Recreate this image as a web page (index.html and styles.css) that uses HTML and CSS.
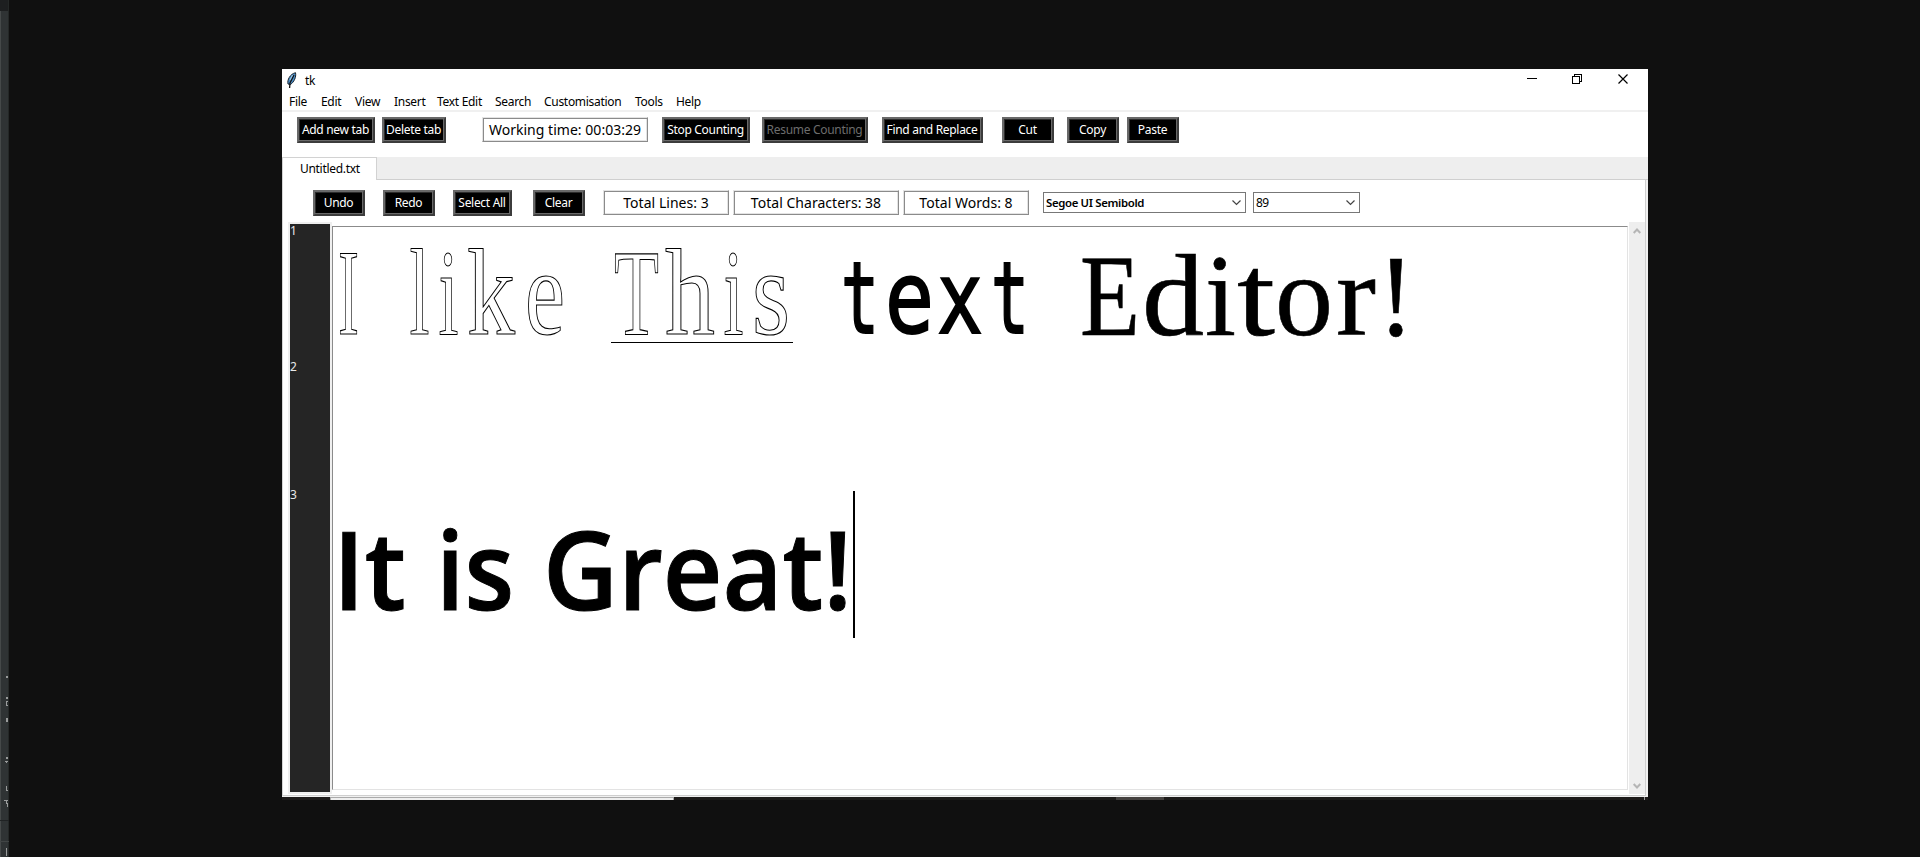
FILE: index.html
```html
<!DOCTYPE html>
<html lang="en">
<head>
<meta charset="utf-8">
<title>tk</title>
<link rel="stylesheet" href="styles.css">
</head>
<body>
<div class="desktop">
  <svg class="side-strip" width="9" height="857" viewBox="0 0 9 857">
    <rect width="9" height="857" fill="#2f3334"/>
    <rect width="1" height="857" fill="#454949"/>
    <rect width="8" height="11" fill="#1d1f20"/>
    <rect x="8" width="1" height="857" fill="#242827"/>
    <g fill="#9a9c9c">
      <rect x="6" y="676" width="2" height="2"/>
      <rect x="6" y="697" width="2" height="2"/>
      <path d="M6 701h2v1h-1v3h1v1h-2z"/>
      <rect x="6" y="718" width="2" height="4"/>
      <rect x="6" y="757" width="2" height="2"/>
      <path d="M5 761h3v1h-1v1h-1v-1h-1z"/>
      <path d="M6 786h1v4h1v1h-2z"/>
      <path d="M4 800h4v1h-1v2h1v4h-1v-3h-1v-3h-2z"/>
      <rect x="6" y="848" width="1" height="8"/>
    </g>
    <rect y="820" width="9" height="1" fill="#202324"/>
    <rect y="841" width="9" height="1" fill="#414545"/>
  </svg>
  <main class="window">
    <header class="titlebar">
      <svg class="feather" width="10" height="17" viewBox="0 0 10 17">
        <path d="M1 12C0 8 3 2 8.500.7C9.500 5 7 10 3.500 12.500Z" fill="#4a8dc6" stroke="#17222d" stroke-width="1"/>
        <path d="M7 3L3 11L2.600 16" fill="none" stroke="#111" stroke-width="1.300"/>
        <path d="M5.500 3L3 8" stroke="#a5cbe8" stroke-width="1"/>
      </svg>
      <span class="title">tk</span>
      <svg class="controls" width="102" height="12" viewBox="0 0 102 12" fill="none" stroke="#000" shape-rendering="crispEdges">
        <path d="M0 5.500h10M45.500 3.500h7v7h-7zM47.500 3.500v-2h7v7h-2"/>
        <path d="M91.500 1.500l9 9m0-9l-9 9" shape-rendering="auto" stroke-width="1.200"/>
      </svg>
    </header>
    <nav class="menu">
      <span class="m-file">File</span><span class="m-edit">Edit</span><span class="m-view">View</span><span class="m-insert">Insert</span><span class="m-text">Text Edit</span><span class="m-search">Search</span><span class="m-custom">Customisation</span><span class="m-tools">Tools</span><span>Help</span>
    </nav>
    <div class="toolbar">
      <div class="btn add">Add new tab</div>
      <div class="btn del">Delete tab</div>
      <div class="counter time">Working time: 00:03:29</div>
      <div class="btn stop">Stop Counting</div>
      <div class="btn resume">Resume Counting</div>
      <div class="btn find">Find and Replace</div>
      <div class="btn cut">Cut</div>
      <div class="btn copy">Copy</div>
      <div class="btn paste">Paste</div>
    </div>
    <div class="tabs"><div class="tab">Untitled.txt</div><div class="tabs-rest"></div></div>
    <section class="pane">
      <div class="editbar">
        <div class="btn undo">Undo</div>
        <div class="btn redo">Redo</div>
        <div class="btn select">Select All</div>
        <div class="btn clear">Clear</div>
        <div class="counter lines">Total Lines: 3</div>
        <div class="counter chars">Total Characters: 38</div>
        <div class="counter words">Total Words: 8</div>
        <div class="combo family"><span>Segoe UI Semibold</span><svg width="9" height="6" viewBox="0 0 9 6"><path d="M.5.500l4 4l4-4" fill="none" stroke="#444" stroke-width="1.200"/></svg></div>
        <div class="combo size"><span>89</span><svg width="9" height="6" viewBox="0 0 9 6"><path d="M.5.500l4 4l4-4" fill="none" stroke="#444" stroke-width="1.200"/></svg></div>
      </div>
      <div class="editor">
        <div class="gutter"><span class="n1">1</span><span class="n2">2</span><span>3</span></div>
        <svg class="page" width="1294" height="562" viewBox="333 227 1294 562">
          <g class="hollow">
            <text x="338" y="333.500" textLength="21" lengthAdjust="spacingAndGlyphs">I</text>
            <text x="409.500" y="333.500" textLength="20" lengthAdjust="spacingAndGlyphs">l</text>
            <text x="438.500" y="333.500" textLength="20" lengthAdjust="spacingAndGlyphs">i</text>
            <text x="467" y="333.500" textLength="48" lengthAdjust="spacingAndGlyphs">k</text>
            <text x="525" y="333.500" textLength="40" lengthAdjust="spacingAndGlyphs">e</text>
            <text x="614" y="333.500" textLength="45" lengthAdjust="spacingAndGlyphs">T</text>
            <text x="665" y="333.500" textLength="50" lengthAdjust="spacingAndGlyphs">h</text>
            <text x="723.500" y="333.500" textLength="20" lengthAdjust="spacingAndGlyphs">i</text>
            <text x="752" y="333.500" textLength="38" lengthAdjust="spacingAndGlyphs">s</text>
          </g>
          <rect x="611" y="342" width="182" height="1"/>
          <g class="fixed">
            <text x="841" y="333" textLength="38" lengthAdjust="spacingAndGlyphs">t</text>
            <text x="885" y="333" textLength="49" lengthAdjust="spacingAndGlyphs">e</text>
            <text x="937" y="333" textLength="46" lengthAdjust="spacingAndGlyphs">x</text>
            <text x="991" y="333" textLength="38" lengthAdjust="spacingAndGlyphs">t</text>
          </g>
          <g class="serif">
            <text x="1080" y="334.500" textLength="60" lengthAdjust="spacingAndGlyphs">E</text>
            <text x="1142" y="334.500" textLength="62" lengthAdjust="spacingAndGlyphs">d</text>
            <text x="1205" y="334.500" textLength="31" lengthAdjust="spacingAndGlyphs">i</text>
            <text x="1237" y="334.500" textLength="38" lengthAdjust="spacingAndGlyphs">t</text>
            <text x="1275" y="334.500" textLength="58" lengthAdjust="spacingAndGlyphs">o</text>
            <text x="1336" y="334.500" textLength="40" lengthAdjust="spacingAndGlyphs">r</text>
            <text x="1378" y="334.500" textLength="36" lengthAdjust="spacingAndGlyphs">!</text>
          </g>
          <g class="semi">
            <text x="333" y="610" textLength="73" lengthAdjust="spacingAndGlyphs">It</text>
            <text x="436" y="610" textLength="78" lengthAdjust="spacingAndGlyphs">is</text>
            <text x="543" y="610" textLength="309" lengthAdjust="spacingAndGlyphs">Great!</text>
          </g>
          <rect x="853" y="491" width="2" height="147"/>
        </svg>
        <div class="scrollbar">
          <svg width="8" height="6" viewBox="0 0 8 6"><path d="M.7 5l3.300-3.500L7.300 5" fill="none" stroke="#b5b5b5" stroke-width="2"/></svg>
          <svg width="8" height="6" viewBox="0 0 8 6"><path d="M.7 1l3.300 3.500L7.300 1" fill="none" stroke="#b5b5b5" stroke-width="2"/></svg>
        </div>
      </div>
    </section>
  </main>
  <div class="under"><i class="u1"></i><i class="u2"></i><i class="u3"></i></div>
</div>
</body>
</html>
```
FILE: styles.css
```css
* { box-sizing: border-box; }
body { margin: 0; background: #101010; overflow: hidden; }
.desktop {
  position: relative;
  width: 1920px;
  height: 857px;
  padding: 69px 0 0 282px;
  font: 12px/14px "Noto Sans", "Open Sans", sans-serif;
  letter-spacing: -0.3px;
  color: #000;
}
.side-strip { position: absolute; left: 0; top: 0; }
.window { width: 1366px; height: 728px; background: #fff; display: flex; flex-direction: column; }

.titlebar { height: 23px; display: flex; align-items: flex-start; padding: 3px 19px 0 5px; }
.title { margin: 2px 0 0 8px; }
.controls { margin: 1px 0 0 auto; }

.menu { height: 20px; flex: none; display: flex; padding: 3px 0 0 7px; border-bottom: 2px solid #f0f0f0; white-space: nowrap; }
.m-file { width: 32px; }
.m-edit { width: 34px; }
.m-view { width: 39px; }
.m-insert { width: 43px; }
.m-text { width: 58px; }
.m-search { width: 49px; }
.m-custom { width: 91px; }
.m-tools { width: 41px; }

.toolbar { height: 45px; flex: none; display: flex; padding: 5px 0 0 15px; }
.btn {
  flex: none;
  height: 26px;
  padding-right: 1px;
  border: 2px solid;
  border-color: #696969 #3c3c3c #3c3c3c #696969;
  box-shadow: inset -1px -1px #696969, inset 1px 1px #2c2c2c;
  background: #000;
  color: #fff;
  line-height: 21px;
  text-align: center;
  white-space: nowrap;
}
.counter {
  flex: none;
  height: 25px;
  border: 1px solid;
  border-color: #e3e3e3 #8b8b8b #8b8b8b #e3e3e3;
  box-shadow: inset 1px 1px #8b8b8b, inset -1px -1px #e3e3e3;
  line-height: 24px;
  text-align: center;
  white-space: nowrap;
  font-size: 14px;
  letter-spacing: 0.03px;
}
.add { width: 78px; }
.del { width: 64px; margin-left: 7px; }
.time { width: 166px; margin-left: 36px; }
.stop { width: 88px; margin-left: 14px; }
.resume { width: 106px; margin-left: 12px; color: #6d6d6d; }
.find { width: 101px; margin-left: 14px; }
.cut { width: 52px; margin-left: 19px; }
.copy { width: 52px; margin-left: 13px; }
.paste { width: 52px; margin-left: 8px; }

.tabs { height: 23px; flex: none; display: flex; }
.tab { width: 95px; border: 1px solid #d2d2d2; border-bottom: 0; padding: 4px 0 0 17px; }
.tabs-rest { flex: 1; background: #eee; border-bottom: 1px solid #cfcfcf; }

.pane { height: 617px; width: 1366px; border: solid #f0f0f0; border-width: 0 2px 1px 0; box-shadow: inset 1px 0 #d5d5d5, inset -1px -1px #cfcfcf; display: flex; flex-direction: column; }
.editbar { height: 42px; flex: none; display: flex; padding: 10px 0 0 31px; }
.undo, .redo, .clear { width: 52px; }
.redo, .select { margin-left: 18px; }
.select { width: 59px; }
.clear { margin-left: 21px; }
.lines { width: 126px; margin-left: 18px; }
.chars { width: 166px; margin-left: 4px; }
.words { width: 126px; margin-left: 4px; }
.combo { height: 21px; margin-top: 2px; border: 1px solid #777; display: flex; align-items: center; justify-content: space-between; padding: 0 4px 0 2px; white-space: nowrap; }
.family { width: 203px; margin-left: 14px; font-weight: 600; font-size: 11.4px; letter-spacing: -0.35px; }
.size { width: 107px; margin-left: 7px; font-size: 12px; letter-spacing: -0.7px; }

.editor { height: 572px; flex: none; display: flex; padding-left: 6px; }
.gutter { width: 44px; height: 572px; border: 2px solid #efefef; background: #252525; color: #e8e8e8; display: flex; flex-direction: column; }
.n1 { height: 136px; }
.n2 { height: 128px; }
.page { width: 1296px; height: 564px; margin: 4px 1px 0 0; border: 1px solid; border-color: #8b8b8b #e3e3e3 #e3e3e3 #8b8b8b; flex: none; overflow: visible; letter-spacing: 0; }
.scrollbar { width: 16px; height: 572px; background: #eee; display: flex; flex-direction: column; justify-content: space-between; align-items: center; padding: 6px 0 5px; }

.hollow { font: 122px "Liberation Serif", serif; fill: #fff; stroke: #000; stroke-width: 1.15; }
.fixed { font: 100px "DejaVu Sans Mono", monospace; stroke: #000; stroke-width: 2; }
.serif { font: 116px "Liberation Serif", serif; stroke: #000; stroke-width: 0.6; }
.semi { font: 600 109px "Open Sans", sans-serif; stroke: #000; stroke-width: 1; }

.under { width: 1366px; height: 3px; display: flex; background: #1d1b1a; }
.u1 { width: 344px; margin-left: 48px; background: #eee; border: solid #aaa; border-width: 1px 1px 0; }
.u2 { width: 48px; margin-left: 442px; background: #454240; }
.u3 { width: 1px; margin-left: 480px; background: #999; }
```
